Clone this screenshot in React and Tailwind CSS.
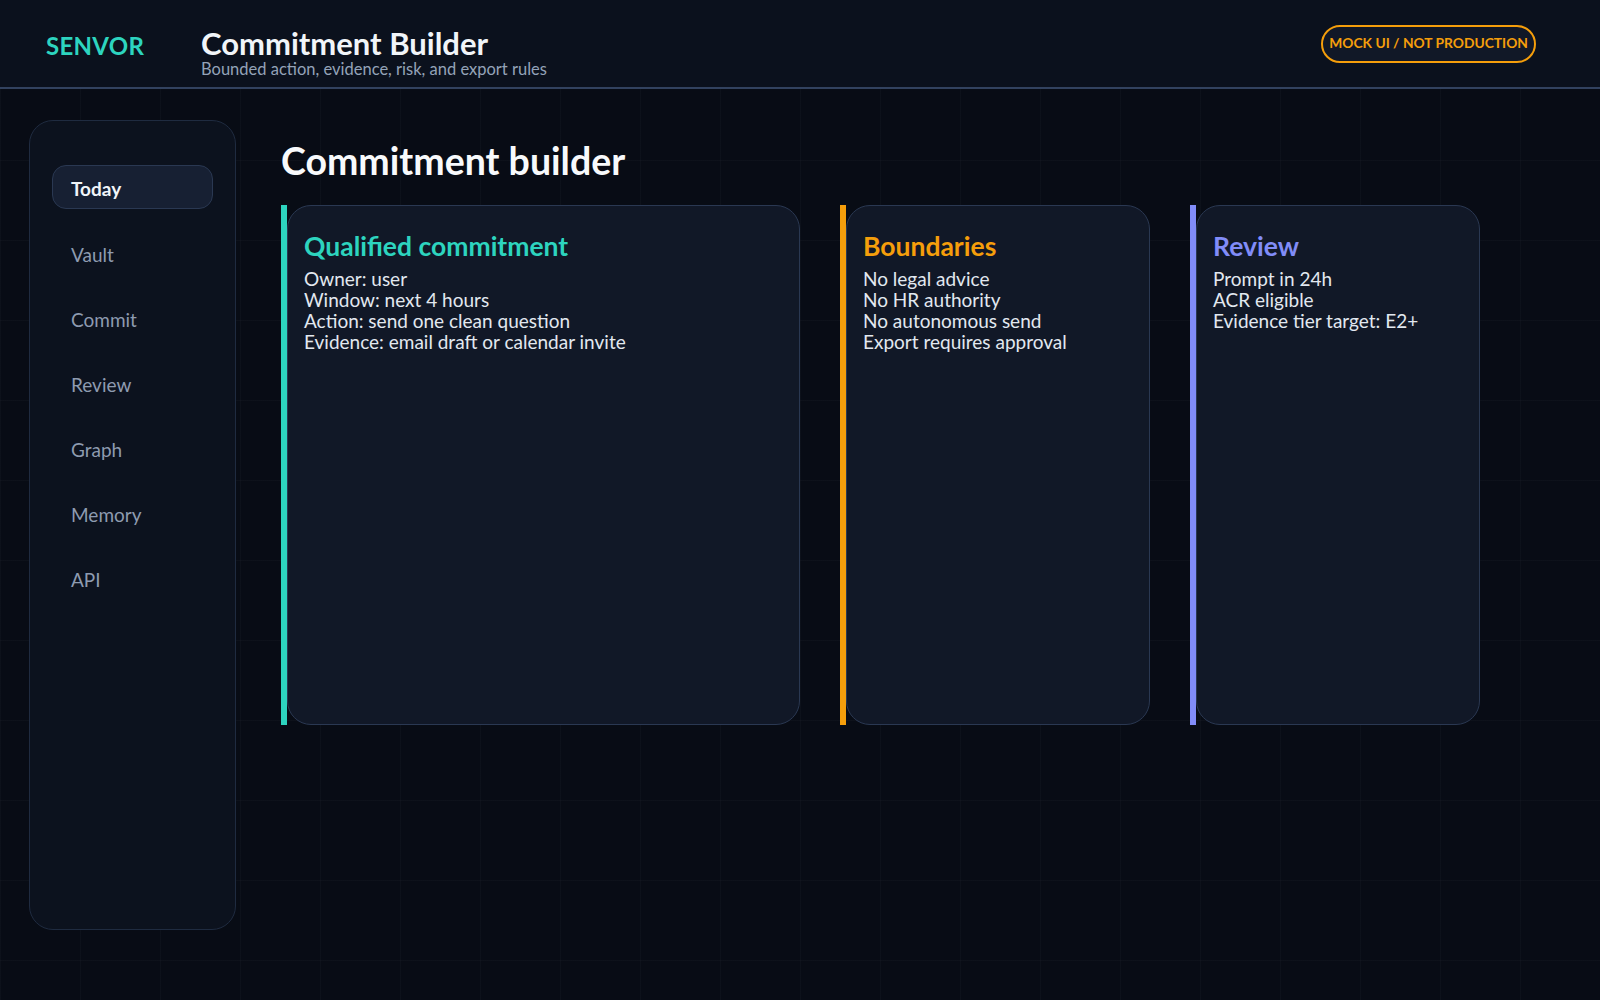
import React from 'react';

const navItems = ['Today', 'Vault', 'Commit', 'Review', 'Graph', 'Memory', 'API'];

const cards = [
  {
    title: 'Qualified commitment',
    bar: 'bg-[#2dd4bf]',
    text: 'text-[#2dd4bf]',
    width: 'w-[519px]',
    lines: [
      'Owner: user',
      'Window: next 4 hours',
      'Action: send one clean question',
      'Evidence: email draft or calendar invite',
    ],
  },
  {
    title: 'Boundaries',
    bar: 'bg-[#f59e0b]',
    text: 'text-[#f59e0b]',
    width: 'w-[310px]',
    lines: ['No legal advice', 'No HR authority', 'No autonomous send', 'Export requires approval'],
  },
  {
    title: 'Review',
    bar: 'bg-[#818cf8]',
    text: 'text-[#818cf8]',
    width: 'w-[290px]',
    lines: ['Prompt in 24h', 'ACR eligible', 'Evidence tier target: E2+'],
  },
];

const Card = ({ card }) => (
  <div className={`flex h-[520px] shrink-0 ${card.width}`}>
    <div className={`w-[6px] shrink-0 ${card.bar}`} />
    <div className="flex-1 rounded-[24px] border border-[#2a3852] bg-[#111827] pl-[16px] pr-4 pt-[24px]">
      <h3 className={`text-[26.5px] font-bold leading-[32px] ${card.text}`}>{card.title}</h3>
      <div className="mt-[6px] text-[19px] leading-[21px] text-[#e2e8f0]">
        {card.lines.map((line) => (
          <div key={line}>{line}</div>
        ))}
      </div>
    </div>
  </div>
);

export default function App() {
  return (
    <div
      className="h-[1000px] w-[1600px] overflow-hidden bg-[#080c15] bg-[linear-gradient(rgba(148,163,184,0.035)_1px,transparent_1px),linear-gradient(90deg,rgba(148,163,184,0.035)_1px,transparent_1px)] bg-[size:80px_80px]"
      style={{ fontFamily: 'Lato, "Open Sans", sans-serif' }}
    >
      <header className="flex h-[89px] items-center border-b-2 border-[#32425f] bg-[#0b111d] pl-[46px] pr-[64px]">
        <div className="w-[155px] pt-[4px] text-[24px] font-bold tracking-[0.3px] text-[#2dd4bf]">SENVOR</div>
        <div className="flex flex-col pt-[18px]">
          <h1 className="text-[31px] font-bold leading-[32px] text-[#f1f5f9]">Commitment Builder</h1>
          <p className="text-[16.5px] leading-[20px] text-[#94a3b8]">Bounded action, evidence, risk, and export rules</p>
        </div>
        <div className="ml-auto flex h-[38px] items-center rounded-full border-2 border-[#f59e0b] bg-[#111827] px-[6px] text-[13.8px] font-bold text-[#f59e0b]">
          MOCK UI / NOT PRODUCTION
        </div>
      </header>

      <div className="flex pl-[29px] pt-[31px]">
        <aside className="h-[810px] w-[207px] shrink-0 rounded-[24px] border border-[#1f2b40] bg-[#0c121e] px-[22px] pt-[44px]">
          <nav className="flex flex-col gap-[21px]">
            {navItems.map((item, i) => (
              <div
                key={item}
                className={
                  i === 0
                    ? 'flex h-[44px] items-center rounded-[14px] border border-[#2a3852] bg-[#172033] px-[18px] pt-[5px] text-[19px] font-bold text-[#f1f5f9]'
                    : 'flex h-[44px] items-center px-[19px] pt-[6px] text-[19px] text-[#8e9bb0]'
                }
              >
                {item}
              </div>
            ))}
          </nav>
        </aside>

        <main className="ml-[45px] pt-[19px]">
          <h2 className="text-[37.5px] font-bold leading-[44px] text-[#f8fafc]">Commitment builder</h2>
          <div className="mt-[22px] flex gap-[40px]">
            {cards.map((card) => (
              <Card key={card.title} card={card} />
            ))}
          </div>
        </main>
      </div>
    </div>
  );
}
